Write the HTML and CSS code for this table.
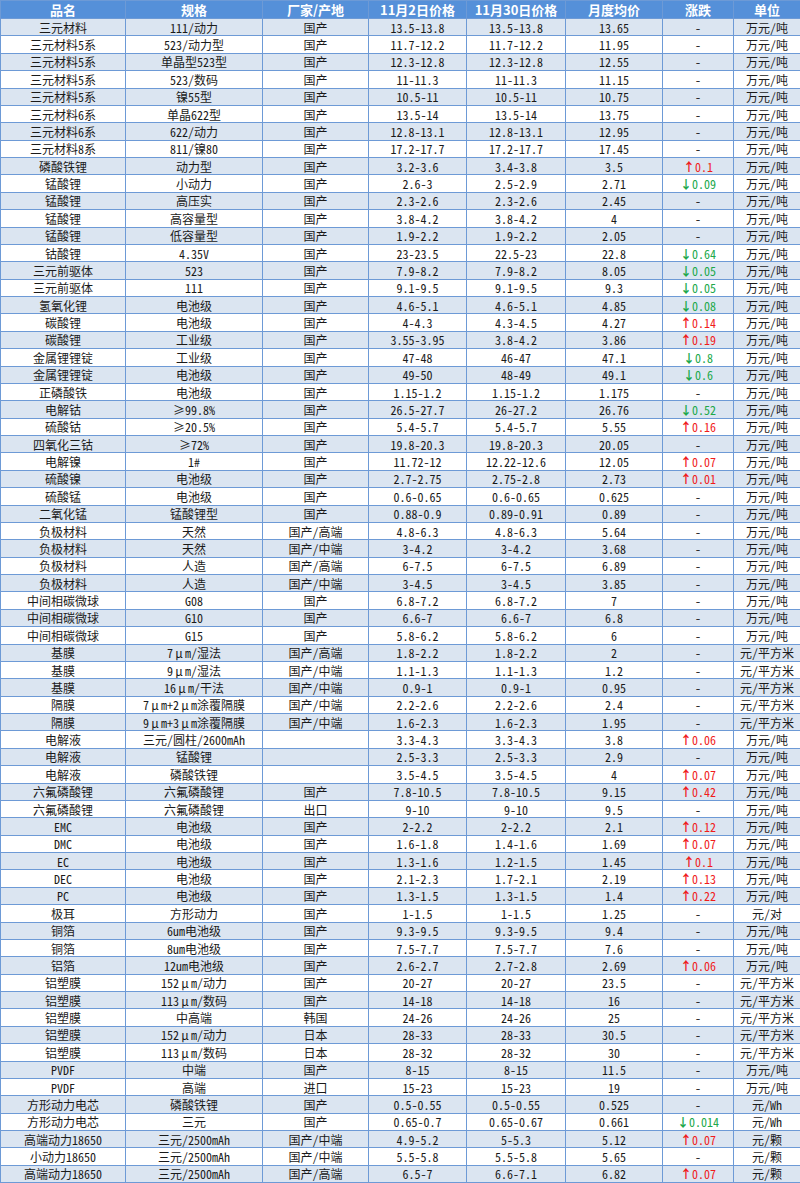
FILE: index.html
```html
<!DOCTYPE html>
<html lang="zh-CN">
<head>
<meta charset="utf-8">
<title>锂电材料价格</title>
<link rel="stylesheet" href="styles.css">
</head>
<body>
<table class="price-table">
<colgroup>
<col class="c-name"><col class="c-spec"><col class="c-origin"><col class="c-p1"><col class="c-p2"><col class="c-avg"><col class="c-chg"><col class="c-unit">
</colgroup>
<thead>
<tr><th>品名</th><th>规格</th><th>厂家/产地</th><th>11月2日价格</th><th>11月30日价格</th><th>月度均价</th><th>涨跌</th><th>单位</th></tr>
</thead>
<tbody>
<tr><td>三元材料</td><td>111/动力</td><td>国产</td><td>13.5-13.8</td><td>13.5-13.8</td><td>13.65</td><td>-</td><td>万元/吨</td></tr>
<tr><td>三元材料5系</td><td>523/动力型</td><td>国产</td><td>11.7-12.2</td><td>11.7-12.2</td><td>11.95</td><td>-</td><td>万元/吨</td></tr>
<tr><td>三元材料5系</td><td>单晶型523型</td><td>国产</td><td>12.3-12.8</td><td>12.3-12.8</td><td>12.55</td><td>-</td><td>万元/吨</td></tr>
<tr><td>三元材料5系</td><td>523/数码</td><td>国产</td><td>11-11.3</td><td>11-11.3</td><td>11.15</td><td>-</td><td>万元/吨</td></tr>
<tr><td>三元材料5系</td><td>镍55型</td><td>国产</td><td>10.5-11</td><td>10.5-11</td><td>10.75</td><td>-</td><td>万元/吨</td></tr>
<tr><td>三元材料6系</td><td>单晶622型</td><td>国产</td><td>13.5-14</td><td>13.5-14</td><td>13.75</td><td>-</td><td>万元/吨</td></tr>
<tr><td>三元材料6系</td><td>622/动力</td><td>国产</td><td>12.8-13.1</td><td>12.8-13.1</td><td>12.95</td><td>-</td><td>万元/吨</td></tr>
<tr><td>三元材料8系</td><td>811/镍80</td><td>国产</td><td>17.2-17.7</td><td>17.2-17.7</td><td>17.45</td><td>-</td><td>万元/吨</td></tr>
<tr><td>磷酸铁锂</td><td>动力型</td><td>国产</td><td>3.2-3.6</td><td>3.4-3.8</td><td>3.5</td><td class="up"><b>↑</b>0.1</td><td>万元/吨</td></tr>
<tr><td>锰酸锂</td><td>小动力</td><td>国产</td><td>2.6-3</td><td>2.5-2.9</td><td>2.71</td><td class="down"><b>↓</b>0.09</td><td>万元/吨</td></tr>
<tr><td>锰酸锂</td><td>高压实</td><td>国产</td><td>2.3-2.6</td><td>2.3-2.6</td><td>2.45</td><td>-</td><td>万元/吨</td></tr>
<tr><td>锰酸锂</td><td>高容量型</td><td>国产</td><td>3.8-4.2</td><td>3.8-4.2</td><td>4</td><td>-</td><td>万元/吨</td></tr>
<tr><td>锰酸锂</td><td>低容量型</td><td>国产</td><td>1.9-2.2</td><td>1.9-2.2</td><td>2.05</td><td>-</td><td>万元/吨</td></tr>
<tr><td>钴酸锂</td><td>4.35V</td><td>国产</td><td>23-23.5</td><td>22.5-23</td><td>22.8</td><td class="down"><b>↓</b>0.64</td><td>万元/吨</td></tr>
<tr><td>三元前驱体</td><td>523</td><td>国产</td><td>7.9-8.2</td><td>7.9-8.2</td><td>8.05</td><td class="down"><b>↓</b>0.05</td><td>万元/吨</td></tr>
<tr><td>三元前驱体</td><td>111</td><td>国产</td><td>9.1-9.5</td><td>9.1-9.5</td><td>9.3</td><td class="down"><b>↓</b>0.05</td><td>万元/吨</td></tr>
<tr><td>氢氧化锂</td><td>电池级</td><td>国产</td><td>4.6-5.1</td><td>4.6-5.1</td><td>4.85</td><td class="down"><b>↓</b>0.08</td><td>万元/吨</td></tr>
<tr><td>碳酸锂</td><td>电池级</td><td>国产</td><td>4-4.3</td><td>4.3-4.5</td><td>4.27</td><td class="up"><b>↑</b>0.14</td><td>万元/吨</td></tr>
<tr><td>碳酸锂</td><td>工业级</td><td>国产</td><td>3.55-3.95</td><td>3.8-4.2</td><td>3.86</td><td class="up"><b>↑</b>0.19</td><td>万元/吨</td></tr>
<tr><td>金属锂锂锭</td><td>工业级</td><td>国产</td><td>47-48</td><td>46-47</td><td>47.1</td><td class="down"><b>↓</b>0.8</td><td>万元/吨</td></tr>
<tr><td>金属锂锂锭</td><td>电池级</td><td>国产</td><td>49-50</td><td>48-49</td><td>49.1</td><td class="down"><b>↓</b>0.6</td><td>万元/吨</td></tr>
<tr><td>正磷酸铁</td><td>电池级</td><td>国产</td><td>1.15-1.2</td><td>1.15-1.2</td><td>1.175</td><td>-</td><td>万元/吨</td></tr>
<tr><td>电解钴</td><td>≥99.8%</td><td>国产</td><td>26.5-27.7</td><td>26-27.2</td><td>26.76</td><td class="down"><b>↓</b>0.52</td><td>万元/吨</td></tr>
<tr><td>硫酸钴</td><td>≥20.5%</td><td>国产</td><td>5.4-5.7</td><td>5.4-5.7</td><td>5.55</td><td class="up"><b>↑</b>0.16</td><td>万元/吨</td></tr>
<tr><td>四氧化三钴</td><td>≥72%</td><td>国产</td><td>19.8-20.3</td><td>19.8-20.3</td><td>20.05</td><td>-</td><td>万元/吨</td></tr>
<tr><td>电解镍</td><td>1#</td><td>国产</td><td>11.72-12</td><td>12.22-12.6</td><td>12.05</td><td class="up"><b>↑</b>0.07</td><td>万元/吨</td></tr>
<tr><td>硫酸镍</td><td>电池级</td><td>国产</td><td>2.7-2.75</td><td>2.75-2.8</td><td>2.73</td><td class="up"><b>↑</b>0.01</td><td>万元/吨</td></tr>
<tr><td>硫酸锰</td><td>电池级</td><td>国产</td><td>0.6-0.65</td><td>0.6-0.65</td><td>0.625</td><td>-</td><td>万元/吨</td></tr>
<tr><td>二氧化锰</td><td>锰酸锂型</td><td>国产</td><td>0.88-0.9</td><td>0.89-0.91</td><td>0.89</td><td>-</td><td>万元/吨</td></tr>
<tr><td>负极材料</td><td>天然</td><td>国产/高端</td><td>4.8-6.3</td><td>4.8-6.3</td><td>5.64</td><td>-</td><td>万元/吨</td></tr>
<tr><td>负极材料</td><td>天然</td><td>国产/中端</td><td>3-4.2</td><td>3-4.2</td><td>3.68</td><td>-</td><td>万元/吨</td></tr>
<tr><td>负极材料</td><td>人造</td><td>国产/高端</td><td>6-7.5</td><td>6-7.5</td><td>6.89</td><td>-</td><td>万元/吨</td></tr>
<tr><td>负极材料</td><td>人造</td><td>国产/中端</td><td>3-4.5</td><td>3-4.5</td><td>3.85</td><td>-</td><td>万元/吨</td></tr>
<tr><td>中间相碳微球</td><td>G08</td><td>国产</td><td>6.8-7.2</td><td>6.8-7.2</td><td>7</td><td>-</td><td>万元/吨</td></tr>
<tr><td>中间相碳微球</td><td>G10</td><td>国产</td><td>6.6-7</td><td>6.6-7</td><td>6.8</td><td>-</td><td>万元/吨</td></tr>
<tr><td>中间相碳微球</td><td>G15</td><td>国产</td><td>5.8-6.2</td><td>5.8-6.2</td><td>6</td><td>-</td><td>万元/吨</td></tr>
<tr><td>基膜</td><td>7<span class="mu">μ</span>m/湿法</td><td>国产/高端</td><td>1.8-2.2</td><td>1.8-2.2</td><td>2</td><td>-</td><td>元/平方米</td></tr>
<tr><td>基膜</td><td>9<span class="mu">μ</span>m/湿法</td><td>国产/中端</td><td>1.1-1.3</td><td>1.1-1.3</td><td>1.2</td><td>-</td><td>元/平方米</td></tr>
<tr><td>基膜</td><td>16<span class="mu">μ</span>m/干法</td><td>国产/中端</td><td>0.9-1</td><td>0.9-1</td><td>0.95</td><td>-</td><td>元/平方米</td></tr>
<tr><td>隔膜</td><td>7<span class="mu">μ</span>m+2<span class="mu">μ</span>m涂覆隔膜</td><td>国产/中端</td><td>2.2-2.6</td><td>2.2-2.6</td><td>2.4</td><td>-</td><td>元/平方米</td></tr>
<tr><td>隔膜</td><td>9<span class="mu">μ</span>m+3<span class="mu">μ</span>m涂覆隔膜</td><td>国产/中端</td><td>1.6-2.3</td><td>1.6-2.3</td><td>1.95</td><td>-</td><td>元/平方米</td></tr>
<tr><td>电解液</td><td>三元/圆柱/2600mAh</td><td></td><td>3.3-4.3</td><td>3.3-4.3</td><td>3.8</td><td class="up"><b>↑</b>0.06</td><td>万元/吨</td></tr>
<tr><td>电解液</td><td>锰酸锂</td><td></td><td>2.5-3.3</td><td>2.5-3.3</td><td>2.9</td><td>-</td><td>万元/吨</td></tr>
<tr><td>电解液</td><td>磷酸铁锂</td><td></td><td>3.5-4.5</td><td>3.5-4.5</td><td>4</td><td class="up"><b>↑</b>0.07</td><td>万元/吨</td></tr>
<tr><td>六氟磷酸锂</td><td>六氟磷酸锂</td><td>国产</td><td>7.8-10.5</td><td>7.8-10.5</td><td>9.15</td><td class="up"><b>↑</b>0.42</td><td>万元/吨</td></tr>
<tr><td>六氟磷酸锂</td><td>六氟磷酸锂</td><td>出口</td><td>9-10</td><td>9-10</td><td>9.5</td><td>-</td><td>万元/吨</td></tr>
<tr><td>EMC</td><td>电池级</td><td>国产</td><td>2-2.2</td><td>2-2.2</td><td>2.1</td><td class="up"><b>↑</b>0.12</td><td>万元/吨</td></tr>
<tr><td>DMC</td><td>电池级</td><td>国产</td><td>1.6-1.8</td><td>1.4-1.6</td><td>1.69</td><td class="up"><b>↑</b>0.07</td><td>万元/吨</td></tr>
<tr><td>EC</td><td>电池级</td><td>国产</td><td>1.3-1.6</td><td>1.2-1.5</td><td>1.45</td><td class="up"><b>↑</b>0.1</td><td>万元/吨</td></tr>
<tr><td>DEC</td><td>电池级</td><td>国产</td><td>2.1-2.3</td><td>1.7-2.1</td><td>2.19</td><td class="up"><b>↑</b>0.13</td><td>万元/吨</td></tr>
<tr><td>PC</td><td>电池级</td><td>国产</td><td>1.3-1.5</td><td>1.3-1.5</td><td>1.4</td><td class="up"><b>↑</b>0.22</td><td>万元/吨</td></tr>
<tr><td>极耳</td><td>方形动力</td><td>国产</td><td>1-1.5</td><td>1-1.5</td><td>1.25</td><td>-</td><td>元/对</td></tr>
<tr><td>铜箔</td><td>6um电池级</td><td>国产</td><td>9.3-9.5</td><td>9.3-9.5</td><td>9.4</td><td>-</td><td>万元/吨</td></tr>
<tr><td>铜箔</td><td>8um电池级</td><td>国产</td><td>7.5-7.7</td><td>7.5-7.7</td><td>7.6</td><td>-</td><td>万元/吨</td></tr>
<tr><td>铝箔</td><td>12um电池级</td><td>国产</td><td>2.6-2.7</td><td>2.7-2.8</td><td>2.69</td><td class="up"><b>↑</b>0.06</td><td>万元/吨</td></tr>
<tr><td>铝塑膜</td><td>152<span class="mu">μ</span>m/动力</td><td>国产</td><td>20-27</td><td>20-27</td><td>23.5</td><td>-</td><td>元/平方米</td></tr>
<tr><td>铝塑膜</td><td>113<span class="mu">μ</span>m/数码</td><td>国产</td><td>14-18</td><td>14-18</td><td>16</td><td>-</td><td>元/平方米</td></tr>
<tr><td>铝塑膜</td><td>中高端</td><td>韩国</td><td>24-26</td><td>24-26</td><td>25</td><td>-</td><td>元/平方米</td></tr>
<tr><td>铝塑膜</td><td>152<span class="mu">μ</span>m/动力</td><td>日本</td><td>28-33</td><td>28-33</td><td>30.5</td><td>-</td><td>元/平方米</td></tr>
<tr><td>铝塑膜</td><td>113<span class="mu">μ</span>m/数码</td><td>日本</td><td>28-32</td><td>28-32</td><td>30</td><td>-</td><td>元/平方米</td></tr>
<tr><td>PVDF</td><td>中端</td><td>国产</td><td>8-15</td><td>8-15</td><td>11.5</td><td>-</td><td>万元/吨</td></tr>
<tr><td>PVDF</td><td>高端</td><td>进口</td><td>15-23</td><td>15-23</td><td>19</td><td>-</td><td>万元/吨</td></tr>
<tr><td>方形动力电芯</td><td>磷酸铁锂</td><td>国产</td><td>0.5-0.55</td><td>0.5-0.55</td><td>0.525</td><td>-</td><td>元/Wh</td></tr>
<tr><td>方形动力电芯</td><td>三元</td><td>国产</td><td>0.65-0.7</td><td>0.65-0.67</td><td>0.661</td><td class="down"><b>↓</b>0.014</td><td>元/Wh</td></tr>
<tr><td>高端动力18650</td><td>三元/2500mAh</td><td>国产/中端</td><td>4.9-5.2</td><td>5-5.3</td><td>5.12</td><td class="up"><b>↑</b>0.07</td><td>元/颗</td></tr>
<tr><td>小动力18650</td><td>三元/2500mAh</td><td>国产/中端</td><td>5.5-5.8</td><td>5.5-5.8</td><td>5.65</td><td>-</td><td>元/颗</td></tr>
<tr><td>高端动力18650</td><td>三元/2500mAh</td><td>国产/高端</td><td>6.5-7</td><td>6.6-7.1</td><td>6.82</td><td class="up"><b>↑</b>0.07</td><td>元/颗</td></tr>
</tbody>
</table>
</body>
</html>
```

FILE: styles.css
```css
html, body {
  margin: 0;
  padding: 0;
  background: #ffffff;
}

.price-table {
  width: 800px;
  table-layout: fixed;
  border-collapse: collapse;
  font-family: "Noto Sans Mono CJK SC", "Noto Sans CJK SC", sans-serif;
  font-size: 12px;
  color: #1a1a1a;
}

.c-name { width: 125px; }
.c-spec { width: 137px; }
.c-origin { width: 106px; }
.c-p1 { width: 98px; }
.c-p2 { width: 99px; }
.c-avg { width: 97px; }
.c-chg { width: 71px; }
.c-unit { width: 67px; }

.price-table th,
.price-table td {
  border: 1px solid #6d9ad6;
  padding: 0;
  text-align: center;
  vertical-align: middle;
  white-space: nowrap;
  overflow: hidden;
  line-height: 15px;
}

.price-table thead tr {
  height: 18px;
}

.price-table th {
  background: #5590d9;
  color: #ffffff;
  font-family: "Noto Sans CJK SC", sans-serif;
  font-size: 13px;
  font-weight: bold;
}

.price-table tbody tr {
  height: 17.388px;
}

.price-table tbody tr:nth-child(odd) td {
  background: #dbe5f1;
}

.price-table tbody tr:nth-child(even) td {
  background: #ffffff;
}

.price-table td.up {
  color: #f01c1c;
}

.price-table td.down {
  color: #20a84a;
}

.price-table td.up b,
.price-table td.down b {
  font-weight: bold;
}

.mu {
  display: inline-block;
  width: 12px;
  text-align: center;
}
```
